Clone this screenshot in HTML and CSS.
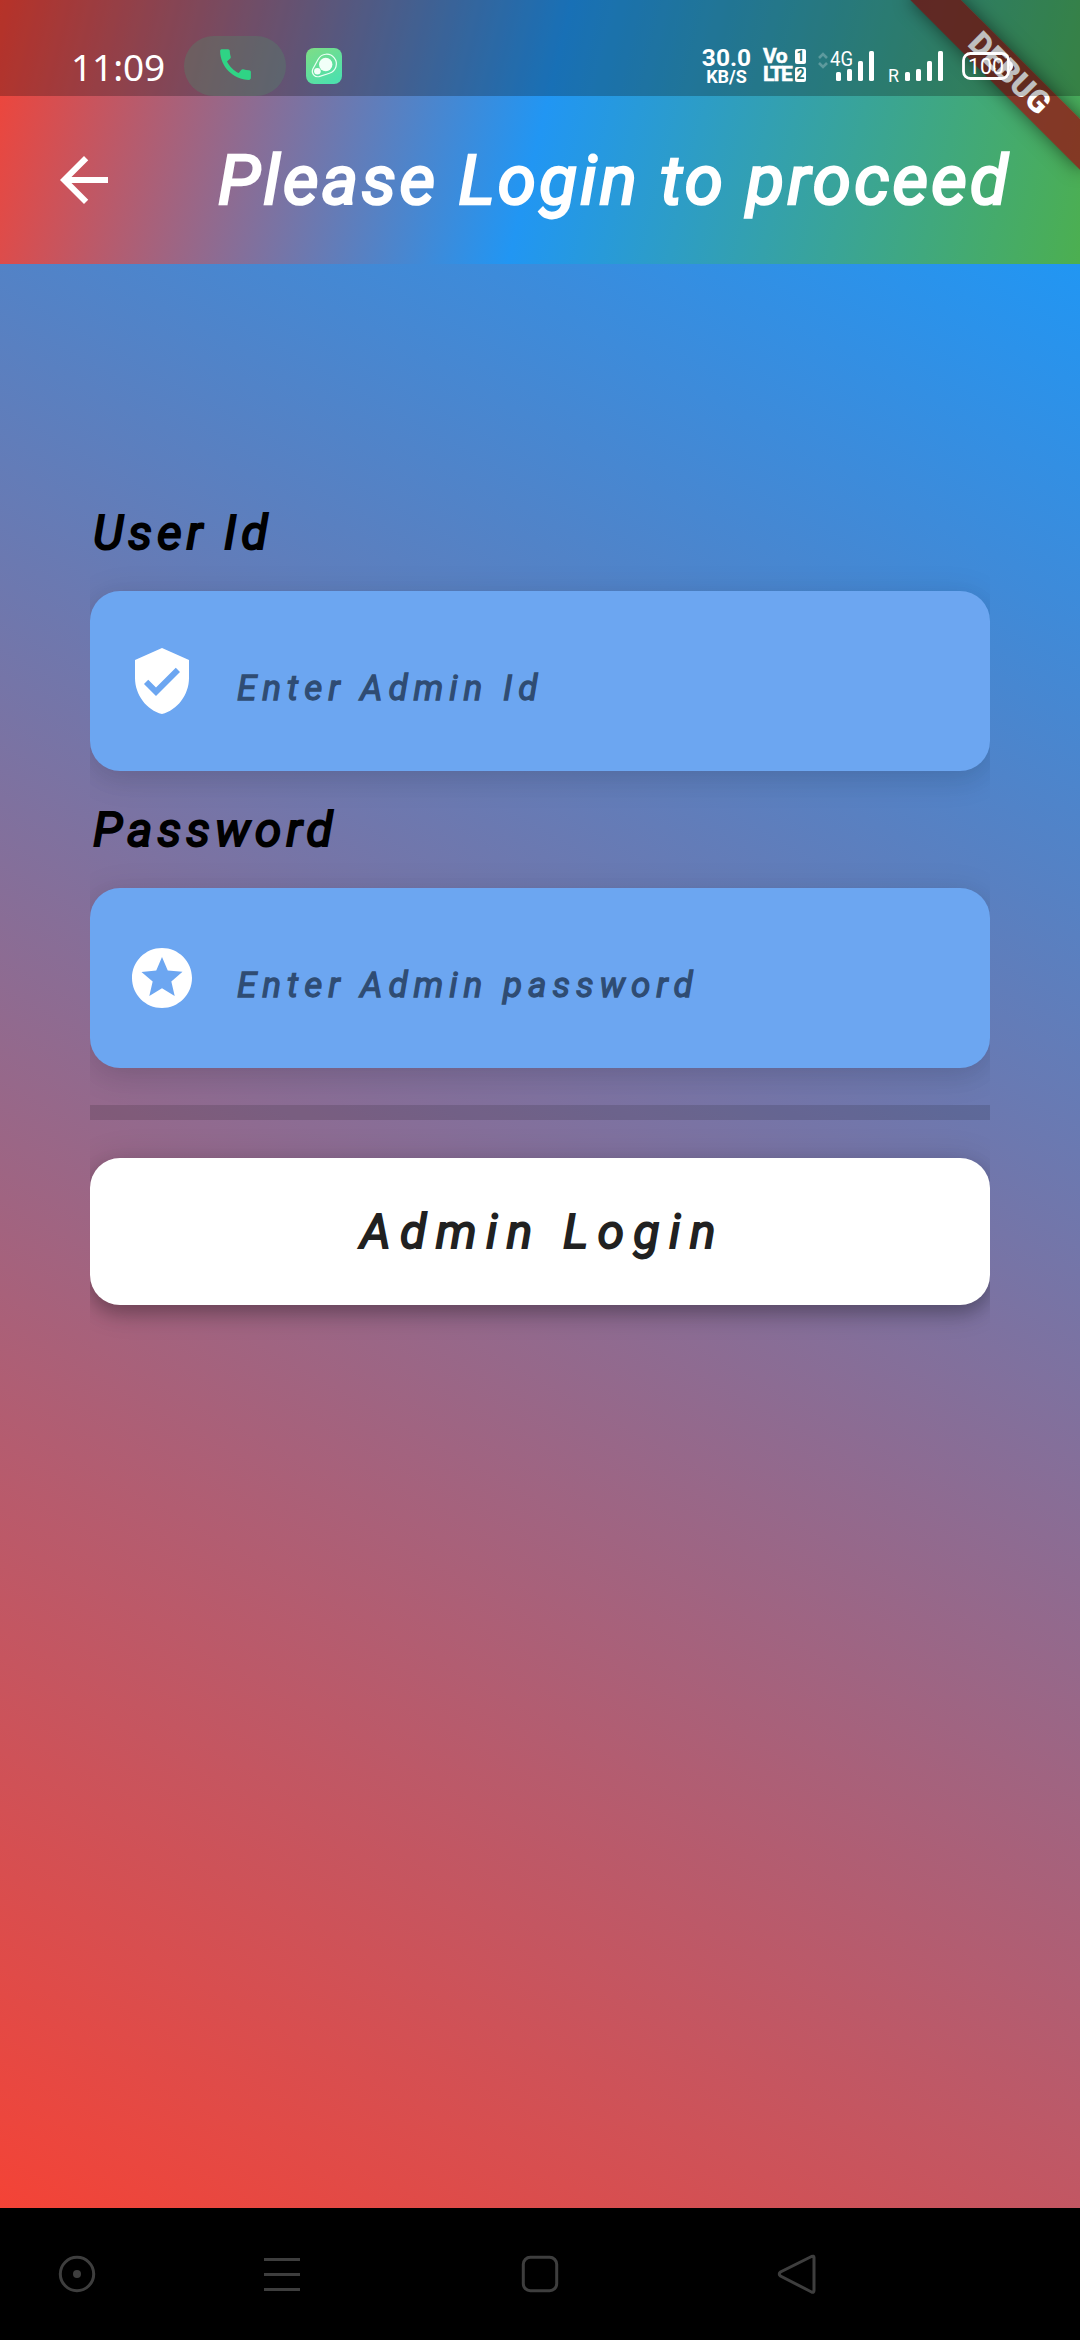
FILE: index.html
```html
<!DOCTYPE html>
<html lang="en">
<head>
<meta charset="utf-8">
<title>Please Login to proceed</title>
<link rel="stylesheet" href="styles.css">
</head>
<body>
<div class="screen">
  <header class="appbar">
    <div class="debug-banner"><span>DEBUG</span></div>
    <div class="status">
      <span class="clock">11:09</span>
      <span class="call-pill"><svg width="41" height="41" viewBox="0 0 24 24"><path fill="#2fd485" d="M20.01 15.38c-1.23 0-2.42-.2-3.53-.56-.35-.12-.74-.03-1.01.24l-1.57 1.97c-2.83-1.35-5.48-3.9-6.89-6.83l1.95-1.66c.27-.28.35-.67.24-1.02-.37-1.11-.56-2.3-.56-3.53 0-.54-.45-.99-.99-.99H4.19C3.65 3 3 3.24 3 3.99 3 13.28 10.73 21 20.01 21c.71 0 .99-.63.99-1.18v-3.45c0-.54-.45-.99-.99-.99z"/></svg></span>
      <svg class="app-icon" width="36" height="36" viewBox="0 0 36 36">
        <defs><linearGradient id="mint" x1="0" y1="0" x2="0.6" y2="1"><stop offset="0" stop-color="#7fdd85"/><stop offset="1" stop-color="#4ee0ac"/></linearGradient></defs>
        <rect width="36" height="36" rx="8" fill="url(#mint)"/>
        <path d="M12.2 11.2A9.7 9.7 0 1 1 23.5 25.2L13 28.6A5.5 5.5 0 0 1 6.7 21.2Z" fill="none" stroke="#e9fff3" stroke-width="1.2"/>
        <circle cx="19.7" cy="16.5" r="6.7" fill="#f1fff8"/>
        <circle cx="11.4" cy="23.2" r="3.3" fill="#f1fff8"/>
      </svg>
      <div class="status-right">
        <span class="speed"><b class="rate">30.0</b><b class="unit">KB/S</b></span>
        <span class="volte"><span><b class="vo">Vo</b><i>1</i></span><span><b class="lte">LTE</b><i>2</i></span></span>
        <svg class="signal" width="146" height="40" viewBox="0 0 146 40">
          <g fill="none" stroke="#fff" stroke-opacity=".25" stroke-width="2.6"><path d="M2 10l4-4 4 4M2 15l4 4 4-4"/></g>
          <g fill="#fff">
            <rect x="19" y="24" width="5" height="9" rx="1.6"/><rect x="30" y="21" width="5" height="12" rx="1.6"/><rect x="41" y="13" width="5" height="20" rx="1.6"/><rect x="52" y="3" width="5" height="30" rx="1.6"/>
            <rect x="88" y="24" width="5" height="9" rx="1.6"/><rect x="99" y="21" width="5" height="12" rx="1.6"/><rect x="110" y="13" width="5" height="20" rx="1.6"/><rect x="121" y="3" width="5" height="30" rx="1.6"/>
            <text x="13" y="17.500" font-size="20.500" textLength="23" lengthAdjust="spacingAndGlyphs">4G</text>
            <text x="71" y="34" font-size="18" textLength="11" lengthAdjust="spacingAndGlyphs">R</text>
          </g>
        </svg>
        <svg class="battery" width="52" height="30" viewBox="0 0 52 30">
          <rect x="1.500" y="2.500" width="45" height="25" rx="7" fill="none" stroke="#fff" stroke-width="2.800"/>
          <path d="M48 10q3 1.500 3 5t-3 5z" fill="#fff"/>
          <text x="6" y="22.500" font-size="22" fill="#fff" textLength="36" lengthAdjust="spacingAndGlyphs">100</text>
        </svg>
      </div>
    </div>
    <div class="toolbar">
      <svg width="72" height="72" viewBox="0 0 24 24"><path fill="#fff" d="M20 11H7.830l5.590-5.590L12 4l-8 8 8 8 1.410-1.410L7.830 13H20v-2z"/></svg>
      <h1>Please Login to proceed</h1>
    </div>
  </header>
  <main class="form">
    <label class="label">User Id</label>
    <div class="field">
      <svg width="72" height="72" viewBox="0 0 24 24"><path fill="#fff" d="M12 1L3 5v6c0 5.550 3.840 10.740 9 12 5.160-1.260 9-6.450 9-12V5l-9-4zm-2 16l-4-4 1.410-1.410L10 14.170l6.590-6.590L18 9l-8 8z"/></svg>
      <span>Enter Admin Id</span>
    </div>
    <label class="label">Password</label>
    <div class="field">
      <svg width="72" height="72" viewBox="0 0 24 24"><path fill="#fff" d="M11.990 2C6.470 2 2 6.480 2 12s4.470 10 9.990 10C17.520 22 22 17.520 22 12S17.520 2 11.990 2zm4.240 16L12 15.450 7.770 18l1.120-4.810-3.730-3.230 4.920-.42L12 5l1.920 4.530 4.920.42-3.730 3.230L16.230 18z"/></svg>
      <span>Enter Admin password</span>
    </div>
    <div class="divider"></div>
    <div class="button">Admin Login</div>
  </main>
  <nav class="navbar">
    <svg width="40" height="40" viewBox="0 0 40 40"><circle cx="20" cy="20" r="16.700"/><circle class="dot" cx="20" cy="20" r="4"/></svg>
    <svg width="40" height="40" viewBox="0 0 40 40"><path d="M2 5.500h36M2 20.500h36M2 35.500h36"/></svg>
    <svg width="40" height="40" viewBox="0 0 40 40"><rect x="3.300" y="3.300" width="33.400" height="33.400" rx="7"/></svg>
    <svg width="40" height="40" viewBox="0 0 40 40"><path d="M34.500 2.500L3.500 18q-2.500 2 0 4l31 16q2.500 1 2.500-1.500v-33q0-2-2.500-1z"/></svg>
  </nav>
</div>
</body>
</html>
```
FILE: styles.css
```css
* { box-sizing: border-box; }
body { margin: 0; font-family: Roboto, sans-serif; }
svg { display: block; flex: none; }
.screen { width: 1080px; height: 2340px; display: flex; flex-direction: column; overflow: hidden; }

.appbar { position: relative; height: 264px; overflow: hidden; display: flex; flex-direction: column; background: linear-gradient(103.74deg, #f44336, #2196f3, #4caf50); }
.debug-banner { position: absolute; left: 960px; top: 84px; width: 240px; height: 36px; transform-origin: 120px -84px; transform: rotate(45deg); background: rgba(150, 20, 20, .76); box-shadow: 0 0 18px rgba(0, 0, 0, .5); color: #fff; font-size: 31.5px; font-weight: 900; line-height: 36px; text-align: center; padding-left: 4px; }
.status { position: relative; height: 96px; display: flex; align-items: flex-start; background: rgba(0, 0, 0, .25); color: #fff; }
.clock { margin: 44px 0 0 71px; width: 113px; font-family: "Noto Sans", sans-serif; font-size: 37px; line-height: 46px; letter-spacing: -.1px; }
.call-pill { margin-top: 36px; width: 102px; height: 60px; border-radius: 30px; background: rgba(86, 128, 104, .4); display: flex; justify-content: center; padding-top: 8px; }
.app-icon { margin: 48px 0 0 20px; }
.status-right { position: absolute; left: 702px; top: 48px; display: flex; align-items: flex-start; }
.speed { width: 49px; display: flex; flex-direction: column; align-items: center; }
.rate { font-size: 24.5px; line-height: 20px; }
.unit { font-size: 18px; line-height: 18px; }
.volte { margin-left: 12px; width: 43px; display: flex; flex-direction: column; gap: 2px; }
.volte > span { display: flex; justify-content: space-between; height: 16px; align-items: center; }
.volte b { font-size: 21px; line-height: 16px; letter-spacing: -.5px; -webkit-text-stroke: .5px #fff; }
.volte .lte { letter-spacing: -2px; }
.volte i { width: 11px; height: 15px; border-radius: 2px; background: #fff; color: #26716f; font: 700 14px/15px Roboto, sans-serif; text-align: center; }
.signal { margin-left: 11px; }
.battery { margin-left: -1px; margin-top: 3px; }
.toolbar { position: relative; height: 168px; display: flex; align-items: center; padding-left: 48px; }
h1 { margin: 0 0 0 98px; color: #fff; font-size: 69px; font-style: italic; font-weight: 400; letter-spacing: 3.3px; white-space: nowrap; -webkit-text-stroke: 2.6px #fff; }

.form { height: 1944px; padding: 237px 90px 0; background: linear-gradient(29.05deg, #f44336, #2196f3); }
.label { display: block; height: 90px; line-height: 64px; padding-left: 3px; font-size: 48px; font-weight: 400; font-style: italic; letter-spacing: 4.85px; color: #000; -webkit-text-stroke: 2px #000; }
.field { height: 180px; margin-bottom: 27px; border-radius: 30px; background: #6ca6f1; box-shadow: 0 6px 36px rgba(0, 0, 0, .1), 0 8px 24px rgba(0, 0, 0, .06); clip-path: inset(-60px 0); display: flex; align-items: center; padding-left: 36px; }
.field span { margin: 14px 0 0 39px; font-size: 35px; font-weight: 400; font-style: italic; letter-spacing: 6px; color: #2f4c73; -webkit-text-stroke: 1.3px #2f4c73; }
.divider { height: 15px; margin-top: 37px; background: rgba(0, 0, 0, .13); }
.button { height: 147px; margin-top: 38px; padding-left: 5px; border-radius: 30px; background: #fff; box-shadow: 0 9px 18px rgba(0, 0, 0, .26), 0 3px 36px rgba(0, 0, 0, .12); clip-path: inset(-60px 0); font-size: 48px; font-weight: 400; font-style: italic; letter-spacing: 9.4px; line-height: 147px; text-align: center; color: #212121; -webkit-text-stroke: 1.8px #212121; }

.navbar { height: 132px; background: #000; display: flex; align-items: center; padding-left: 57px; }
.navbar svg { fill: none; stroke: #3e3e3e; stroke-width: 3; }
.navbar .dot { fill: #3e3e3e; stroke: none; }
.navbar svg:nth-child(2) { margin-left: 165px; }
.navbar svg:nth-child(3) { margin-left: 218px; }
.navbar svg:nth-child(4) { margin-left: 217px; }
```
